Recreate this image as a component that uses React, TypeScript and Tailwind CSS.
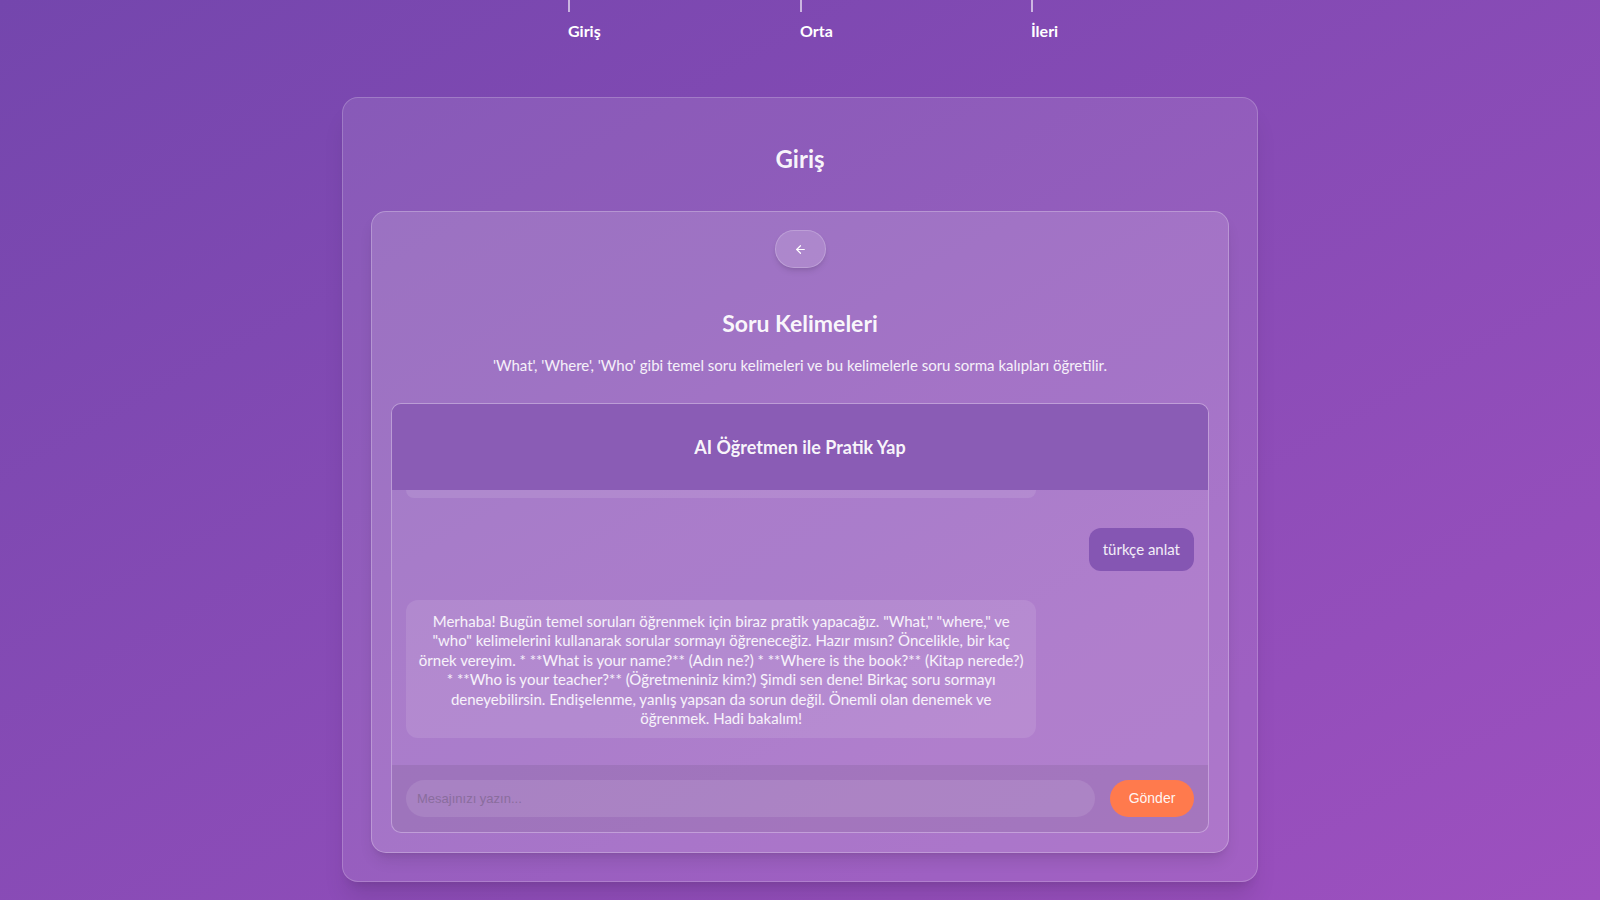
import { ArrowLeft } from "lucide-react";

// Aşamalar (üstteki zaman çizelgesi)
const steps = [
  { label: "Giriş", width: "w-[232px]" },
  { label: "Orta", width: "w-[231px]" },
  { label: "İleri", width: "w-auto" },
];

// Satır sonları referanstaki kırılımla aynı tutuldu
const assistantText = [
  'Merhaba! Bugün temel soruları öğrenmek için biraz pratik yapacağız. "What," "where," ve',
  '"who" kelimelerini kullanarak sorular sormayı öğreneceğiz. Hazır mısın? Öncelikle, bir kaç',
  "örnek vereyim. * **What is your name?** (Adın ne?) * **Where is the book?** (Kitap nerede?)",
  "* **Who is your teacher?** (Öğretmeniniz kim?) Şimdi sen dene! Birkaç soru sormayı",
  "deneyebilirsin. Endişelenme, yanlış yapsan da sorun değil. Önemli olan denemek ve",
  "öğrenmek. Hadi bakalım!",
].join("\n");

function StepBar() {
  return (
    <div className="w-[916px] mx-auto flex pl-[226px]">
      {steps.map((s) => (
        <div key={s.label} className={`${s.width} flex flex-col items-start`}>
          <div className="w-[2px] h-[12px] bg-white/60" />
          <span className="mt-[9px] text-[16px] leading-[20px] font-bold text-white">
            {s.label}
          </span>
        </div>
      ))}
    </div>
  );
}

function ChatBox() {
  return (
    <div className="mt-[27px] rounded-[10px] border border-white/25 bg-white/[0.07] overflow-hidden flex flex-col">
      {/* Başlık */}
      <div className="h-[86px] bg-[#8a5cb5] flex items-center justify-center">
        <h3 className="text-[18px] font-bold text-white/95">AI Öğretmen ile Pratik Yap</h3>
      </div>

      {/* Mesajlar (önceki mesajın yalnızca alt kenarı görünüyor) */}
      <div className="h-[275px] px-[14px] flex flex-col overflow-hidden">
        <div className="w-[80%] h-[8px] shrink-0 rounded-b-[12px] bg-white/10" />
        <div className="mt-[30px] self-end shrink-0 rounded-[12px] bg-[#8556b3] px-[14px] py-[12px] text-[15px] leading-[19px] text-white/90">
          türkçe anlat
        </div>
        <div className="mt-[29px] self-start w-[80%] shrink-0 rounded-[12px] bg-white/10 px-[8px] pt-[12px] pb-[10px] text-[15px] leading-[19.4px] text-white/90 whitespace-pre-line">
          {assistantText}
        </div>
      </div>

      {/* Giriş alanı */}
      <div className="bg-black/[0.07] px-[14px] pt-[15px] pb-[15px] flex items-center gap-[15px]">
        <input
          type="text"
          placeholder="Mesajınızı yazın..."
          className="flex-1 h-[37px] rounded-full bg-white/10 px-[11px] text-[13px] text-white placeholder:text-[#8a6d9d] outline-none"
          style={{ fontFamily: '"Liberation Sans", Arial, sans-serif' }}
        />
        <button
          type="button"
          className="w-[84px] h-[37px] rounded-full bg-[#ff7a4d] text-[14px] text-white/95"
          style={{ fontFamily: '"Liberation Sans", Arial, sans-serif' }}
        >
          Gönder
        </button>
      </div>
    </div>
  );
}

export default function App() {
  return (
    <div
      className="w-full h-[900px] overflow-hidden bg-gradient-to-br from-[#7446ad] to-[#9d50bf] text-center"
      style={{ fontFamily: '"Segoe UI", Lato, "Noto Sans", sans-serif' }}
    >
      <StepBar />

      {/* Seviye kartı */}
      <div className="mt-[56px] w-[916px] mx-auto rounded-[16px] border border-white/20 bg-white/10 shadow-xl px-[28px] pt-[45px] pb-[28px]">
        <h2 className="text-[24px] leading-[32px] font-bold text-white/95">Giriş</h2>

        {/* Konu kartı */}
        <div className="mt-[36px] rounded-[15px] border border-white/25 bg-white/[0.14] shadow-lg px-[19px] pt-[18px] pb-[19px]">
          <div className="flex justify-center">
            <button
              type="button"
              className="w-[51px] h-[38px] rounded-full border border-white/20 bg-white/15 shadow-md flex items-center justify-center text-white"
              aria-label="Geri"
            >
              <ArrowLeft size={13} strokeWidth={2.2} />
            </button>
          </div>

          <h3 className="mt-[40px] text-[23px] leading-[30px] font-bold text-white/95">
            Soru Kelimeleri
          </h3>
          <p className="mt-[16px] text-[15px] leading-[22px] text-white/90">
            'What', 'Where', 'Who' gibi temel soru kelimeleri ve bu kelimelerle soru sorma kalıpları öğretilir.
          </p>

          <ChatBox />
        </div>
      </div>
    </div>
  );
}
